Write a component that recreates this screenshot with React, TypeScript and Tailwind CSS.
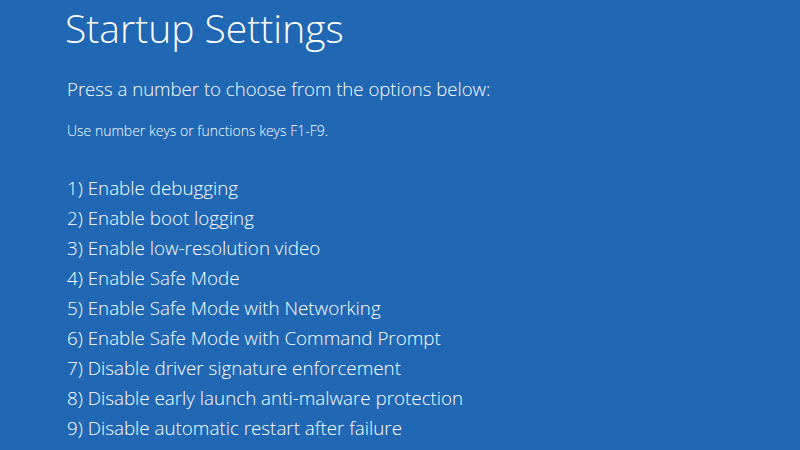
export default function App() {
  const items = [
    "1) Enable debugging",
    "2) Enable boot logging",
    "3) Enable low-resolution video",
    "4) Enable Safe Mode",
    "5) Enable Safe Mode with Networking",
    "6) Enable Safe Mode with Command Prompt",
    "7) Disable driver signature enforcement",
    "8) Disable early launch anti-malware protection",
    "9) Disable automatic restart after failure",
  ];
  return (
    <div
      className="w-[800px] h-[450px] overflow-hidden bg-[#2067b4] text-white pl-[65px] flex flex-col"
      style={{ fontFamily: '"Open Sans", "Noto Sans", sans-serif' }}
    >
      <div className="mt-[5px] text-[39px] leading-[46px] font-light">Startup Settings</div>
      <div className="mt-[26px] text-[18.6px] leading-[24px] font-light pl-[2px]">
        Press a number to choose from the options below:
      </div>
      <div className="mt-[22px] text-[14px] leading-[16px] font-[350] pl-[2px]">
        Use number keys or functions keys F1-F9.
      </div>
      <div className="mt-[34px] flex flex-col pl-[2px]">
        {items.map((t) => (
          <div key={t} className="text-[18.8px] leading-[30px] font-light">
            {t}
          </div>
        ))}
      </div>
    </div>
  );
}
